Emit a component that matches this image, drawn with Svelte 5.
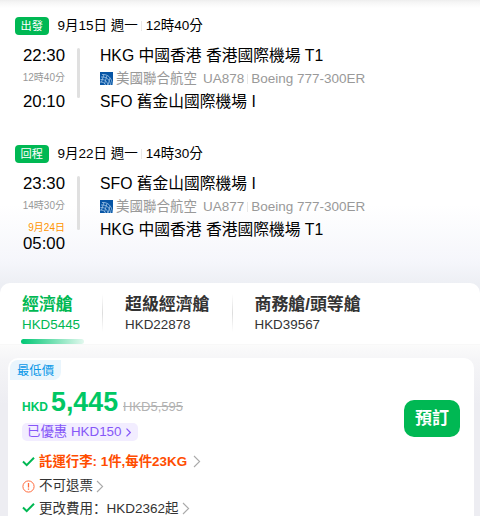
<script>
  const legs = [
    {
      label: '出發',
      date: '9月15日 週一',
      duration: '12時40分',
      depart: '22:30',
      arrive: '20:10',
      arriveDate: '',
      from: 'HKG 中國香港 香港國際機場 T1',
      to: 'SFO 舊金山國際機場 I',
      airline: '美國聯合航空',
      flight: 'UA878',
      plane: 'Boeing 777-300ER',
    },
    {
      label: '回程',
      date: '9月22日 週一',
      duration: '14時30分',
      depart: '23:30',
      arrive: '05:00',
      arriveDate: '9月24日',
      from: 'SFO 舊金山國際機場 I',
      to: 'HKG 中國香港 香港國際機場 T1',
      airline: '美國聯合航空',
      flight: 'UA877',
      plane: 'Boeing 777-300ER',
    },
  ];

  const cabins = [
    { name: '經濟艙', price: 'HKD5445' },
    { name: '超級經濟艙', price: 'HKD22878' },
    { name: '商務艙/頭等艙', price: 'HKD39567' },
  ];

  let activeCabin = 0;
</script>

<style>
  :global(body) {
    margin: 0;
    overflow: hidden;
  }

  main {
    display: flex;
    flex-direction: column;
    height: 516px;
    overflow: hidden;
    background: linear-gradient(#fff 205px, #f5f6fb 262px, #edeff4 284px, #ededf2);
    color: #000;
    font-family: 'Liberation Sans', 'Noto Sans CJK TC', sans-serif;
    font-size: 13.4px;
    white-space: nowrap;
  }

  button {
    margin: 0;
    border: none;
    padding: 0;
    background: none;
    color: inherit;
    font: inherit;
    text-align: left;
    cursor: pointer;
  }

  svg {
    display: block;
    flex: none;
  }

  .legs {
    flex: none;
    box-sizing: border-box;
    height: 283px;
    padding: 17px 15px 0;
    background: linear-gradient(#eee 0, #f5f5f5 2px, #fff 8px, transparent 8px);
  }

  .leg {
    height: 128px;
  }

  .leg-head {
    display: flex;
    align-items: center;
    height: 18px;
    font-size: 13.5px;
    line-height: 18px;
  }

  .badge {
    width: 33.5px;
    margin-right: 9px;
    border-radius: 4px;
    background: #00b853;
    color: #fff;
    font-size: 11.2px;
    text-align: center;
  }

  .split {
    width: 1px;
    height: 10px;
    margin: 0 3px;
    background: #e8e8e8;
  }

  .leg-head .split {
    margin-right: 4px;
  }

  .leg-body {
    display: flex;
    padding: 8px 0 0 7px;
  }

  .times,
  .stops {
    display: flex;
    flex-direction: column;
    line-height: 23.4px;
  }

  .times {
    width: 43px;
    margin-top: 1px;
    align-items: flex-end;
    font-size: 16.8px;
  }

  .times small {
    color: #999;
    font-size: 10px;
    line-height: 22px;
    height: 23px;
  }

  .times .next-day {
    height: 16px;
    color: #ff9500;
    line-height: 19px;
  }

  .next-day + span {
    line-height: 19px;
  }

  .line {
    width: 3px;
    height: 50px;
    margin: 5px 20px 0 12px;
    border-radius: 2px;
    background: #e0e0e0;
  }

  .line.long {
    height: 54px;
  }

  .stops {
    margin-top: 1px;
    font-size: 15.75px;
    line-height: 23px;
  }

  .plane {
    display: flex;
    align-items: center;
    color: #999;
    font-size: 13.5px;
  }

  .plane svg {
    margin: 0 3px 0 0;
  }

  .plane .flight {
    margin-left: 6px;
  }

  .cabins {
    display: flex;
    flex: none;
    box-sizing: border-box;
    height: 62px;
    padding: 11px 22px 0;
    border-bottom: 1px solid #f8f8f8;
    border-radius: 10px 10px 0 0;
    background: #fff;
  }

  .cabin {
    position: relative;
    display: flex;
    flex-direction: column;
    height: 50px;
    color: #333;
    line-height: 20px;
  }

  .cabin strong {
    font-size: 16.9px;
    line-height: 21px;
  }

  .cabin.active {
    color: #00b853;
  }

  .cabin.active::after {
    content: '';
    position: absolute;
    left: -1px;
    bottom: 0;
    width: 63px;
    height: 5px;
    border-radius: 3px;
    background: linear-gradient(90deg, #00c774, #e2f8ee);
  }

  .cabin-split {
    width: 1px;
    height: 38px;
    margin: 0 22px 0 22px;
    background: linear-gradient(#fff, #ddd 50%, #fff);
  }

  .offers {
    flex: 1;
    padding: 13px 6px 0 8px;
    background: linear-gradient(#fbfbfb, #f5f5f7 15px, #ededf2 60px);
  }

  .offer {
    display: flex;
    justify-content: space-between;
    box-sizing: border-box;
    height: 180px;
    padding: 2px 14px 0 2px;
    border-radius: 10px;
    background: #fff;
  }

  .info {
    display: flex;
    flex-direction: column;
    align-items: flex-start;
  }

  .lowest {
    width: 51px;
    height: 20px;
    border-radius: 8px 0 8px 0;
    background: #e9f5fd;
    color: #0998e8;
    font-size: 12.4px;
    line-height: 22px;
    text-align: center;
  }

  .price {
    display: flex;
    align-items: baseline;
    height: 36px;
    margin: 6px 0 0 12px;
    color: #00c764;
    line-height: 33px;
  }

  .price b {
    font-size: 12px;
  }

  .price strong {
    margin: 0 5px 0 3px;
    font-size: 26.8px;
  }

  .price del {
    color: #b2b2b2;
    font-size: 13px;
  }

  .discount {
    display: flex;
    align-items: center;
    height: 18px;
    margin: 1px 0 7px 12px;
    padding: 0 7px 0 5px;
    border-radius: 5px;
    background: #f2edff;
    color: #8657f8;
    line-height: 18px;
  }

  .discount svg {
    margin-left: 4px;
  }

  .rule {
    display: flex;
    align-items: center;
    height: 22px;
    margin-left: 12px;
    color: #333;
    font-size: 13.5px;
    line-height: 20px;
  }

  .rule svg:first-child {
    margin-right: 4px;
  }

  .rule svg:last-child {
    margin-left: 3px;
  }

  .rule.bag {
    height: 27px;
    color: #ff4d00;
    font-weight: bold;
    font-size: 13.4px;
  }

  .rule.bag svg:last-child {
    margin-left: 6px;
  }

  .colon {
    font-family: 'Noto Sans CJK SC', sans-serif;
  }

  .book {
    width: 56px;
    height: 37px;
    margin-top: 40px;
    border-radius: 10px;
    background: #00b853;
    color: #fff;
    font-size: 17px;
    font-weight: bold;
    line-height: 37px;
    text-align: center;
  }
</style>

{#snippet check()}
  <svg width="13" height="12" viewBox="0 0 13 12"><path d="M1 5.500l3.700 3.600L12 1.700" fill="none" stroke="#00b853" stroke-width="2" /></svg>
{/snippet}

{#snippet arrow()}
  <svg width="8" height="13" viewBox="0 0 8 13"><path d="M1 1l5.600 5.500L1 12" fill="none" stroke="#aaa" stroke-width="1.100" /></svg>
{/snippet}

<main>
  <section class="legs">
    {#each legs as leg}
      <div class="leg">
        <div class="leg-head">
          <span class="badge">{leg.label}</span>
          <span>{leg.date}</span>
          <i class="split"></i>
          <span>{leg.duration}</span>
        </div>
        <div class="leg-body">
          <div class="times">
            <span>{leg.depart}</span>
            <small>{leg.duration}</small>
            {#if leg.arriveDate}
              <small class="next-day">{leg.arriveDate}</small>
            {/if}
            <span>{leg.arrive}</span>
          </div>
          <i class="line" class:long={leg.arriveDate}></i>
          <div class="stops">
            <span>{leg.from}</span>
            <div class="plane">
              <svg width="13" height="13" viewBox="0 0 13 13">
                <rect width="13" height="13" fill="#0755a5" />
                <path d="M2 2.500C8 2 12 6 12.500 13M1 5c6-.5 9 3 9.500 8M.5 7.500C5 7 7.500 10 7.800 13M0 10c3 0 5 1 5.500 3M4 2.500L1.500 10M7 3.500L4.500 12M10 6L8 13" fill="none" stroke="#9fc4e6" stroke-width=".8" />
              </svg>
              <span>{leg.airline}</span>
              <span class="flight">{leg.flight}</span>
              <i class="split"></i>
              <span>{leg.plane}</span>
            </div>
            <span>{leg.to}</span>
          </div>
        </div>
      </div>
    {/each}
  </section>

  <nav class="cabins">
    {#each cabins as cabin, i}
      {#if i > 0}
        <i class="cabin-split"></i>
      {/if}
      <button class="cabin" class:active={i === activeCabin} on:click={() => (activeCabin = i)}>
        <strong>{cabin.name}</strong>
        <span>{cabin.price}</span>
      </button>
    {/each}
  </nav>

  <section class="offers">
    <div class="offer">
      <div class="info">
        <span class="lowest">最低價</span>
        <div class="price">
          <b>HKD</b>
          <strong>5,445</strong>
          <del>HKD5,595</del>
        </div>
        <button class="discount">
          已優惠 HKD150
          <svg width="5" height="9" viewBox="0 0 5 9"><path d="M.5 .7l3.800 3.800L.5 8.300" fill="none" stroke="#8657f8" stroke-width="1.200" /></svg>
        </button>
        <div class="rule bag">
          {@render check()}
          <span>託運行李: 1件,每件23KG</span>
          {@render arrow()}
        </div>
        <div class="rule">
          <svg width="13" height="13" viewBox="0 0 13 13">
            <circle cx="6.500" cy="6.500" r="5.600" fill="none" stroke="#ff6b3d" />
            <path d="M6.500 3v4.500M6.500 8.500v1.300" stroke="#ff6b3d" stroke-width="1.300" />
          </svg>
          <span>不可退票</span>
          {@render arrow()}
        </div>
        <div class="rule">
          {@render check()}
          <span>更改費用<span class="colon">：</span>HKD2362起</span>
          {@render arrow()}
        </div>
      </div>
      <button class="book">預訂</button>
    </div>
  </section>
</main>
